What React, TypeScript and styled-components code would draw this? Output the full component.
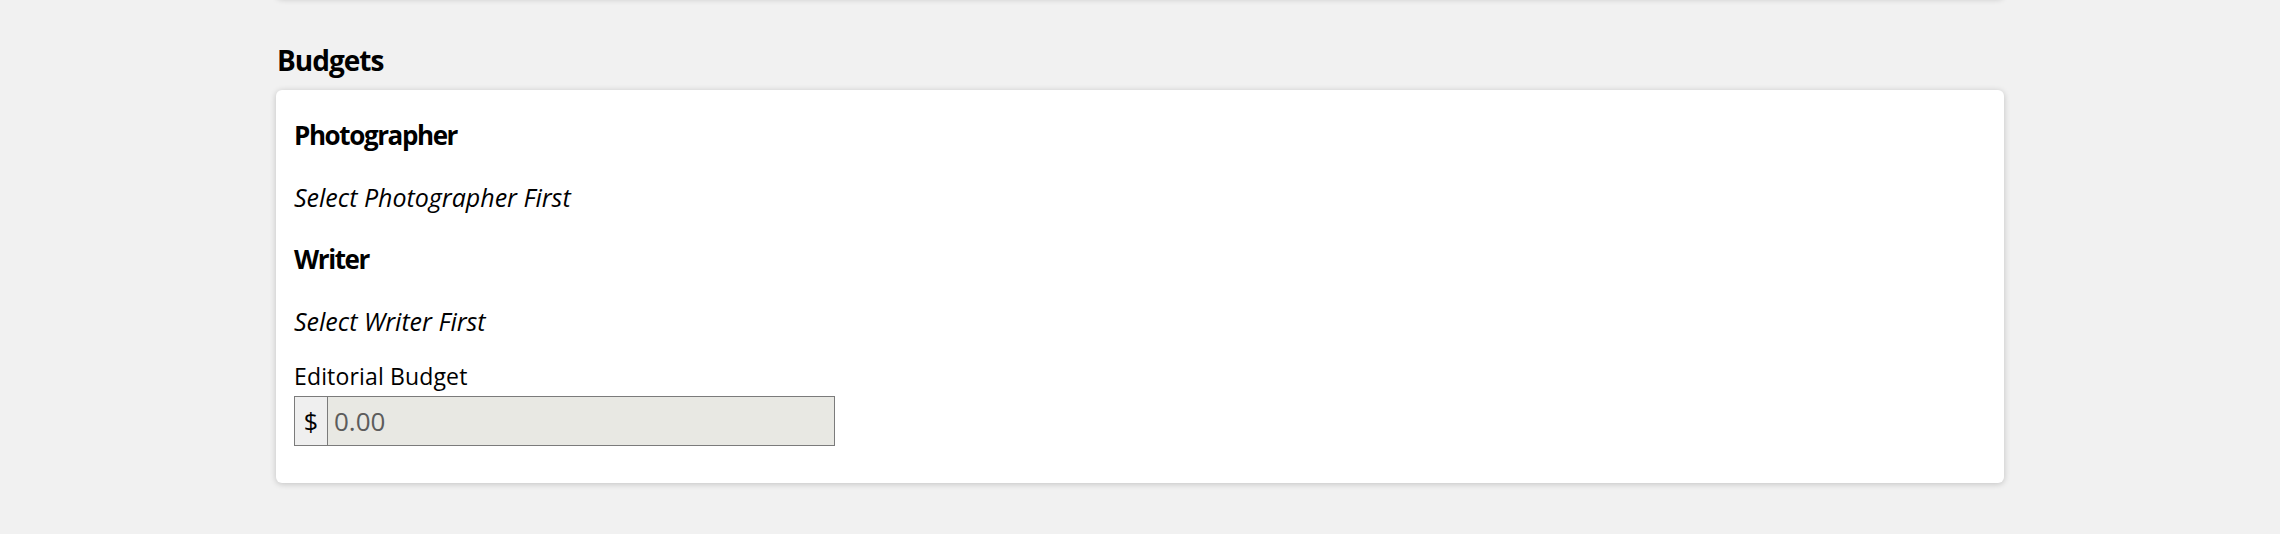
import React from "react";
import styled, { createGlobalStyle } from "styled-components";

const GlobalStyle = createGlobalStyle`
  html, body {
    margin: 0;
    padding: 0;
    background: #f1f1f1;
    font-family: "Open Sans", "Liberation Sans", sans-serif;
    color: #000;
  }
`;

const Page = styled.div`
  max-width: 1728px;
  margin: 0 auto;
  padding-bottom: 40px;
`;

const Card = styled.div`
  background: #fff;
  border-radius: 6px;
  box-shadow: 0 1px 6px rgba(0, 0, 0, 0.2);
`;

const PrevCard = styled(Card)`
  height: 38px;
  margin-top: -40px;
`;

const SectionTitle = styled.h2`
  font-size: 28px;
  line-height: 32px;
  font-weight: 700;
  letter-spacing: -1px;
  margin: 46px 0 14px 1px;
`;

const Body = styled(Card)`
  padding: 29px 18px 37px;
`;

const RoleTitle = styled.h3`
  font-size: 26px;
  line-height: 32px;
  font-weight: 700;
  letter-spacing: -1.4px;
  margin: 0 0 30px;
`;

const Hint = styled.p<{ $last?: boolean }>`
  font-size: 25px;
  line-height: 32px;
  font-style: italic;
  margin: 0 0 ${(p) => (p.$last ? "23px" : "30px")};
`;

const Label = styled.label`
  display: block;
  font-size: 23px;
  line-height: 32px;
  letter-spacing: 0.15px;
  margin-bottom: 4px;
`;

const InputGroup = styled.div`
  display: flex;
  width: 539px;
  height: 48px;
  border: 1px solid #7b7b7b;
`;

const Addon = styled.span`
  display: flex;
  align-items: center;
  justify-content: center;
  width: 32px;
  background: #efefef;
  border-right: 1px solid #7b7b7b;
  font-size: 25px;
`;

const Amount = styled.input`
  flex: 1;
  min-width: 0;
  border: none;
  outline: none;
  background: #e8e8e3;
  padding: 0 6px;
  font-family: "Open Sans", "Liberation Sans", sans-serif;
  font-size: 26px;
  color: #5c5c5c;
`;

const App = () => {
  const roles = ["Photographer", "Writer"];

  return (
    <Page>
      <GlobalStyle />
      <PrevCard />
      <SectionTitle>Budgets</SectionTitle>
      <Body>
        {roles.map((role, i) => (
          <div key={role}>
            <RoleTitle>{role}</RoleTitle>
            <Hint $last={i === roles.length - 1}>Select {role} First</Hint>
          </div>
        ))}
        <Label htmlFor="editorial-budget">Editorial Budget</Label>
        <InputGroup>
          <Addon>$</Addon>
          <Amount id="editorial-budget" value="0.00" readOnly />
        </InputGroup>
      </Body>
    </Page>
  );
};

export default App;
